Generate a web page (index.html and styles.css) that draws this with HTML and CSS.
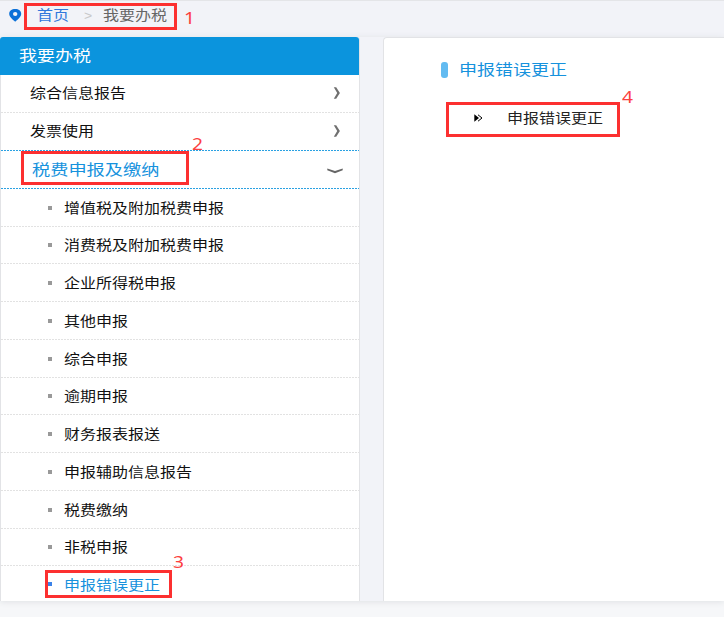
FILE: index.html
```html
<!DOCTYPE html>
<html lang="zh-CN">
<head>
<meta charset="utf-8">
<title>我要办税</title>
<link rel="stylesheet" href="styles.css">
</head>
<body>
<nav class="crumbs">
  <svg class="pin" viewBox="0 0 13 13"><path fill="#0b70d8" fill-rule="evenodd" d="M6.2 0C2.7 0 .2 2 .2 4.800C.2 7.900 3.500 10.600 6.200 12.700C8.900 10.600 12.200 7.900 12.200 4.800C12.200 2 9.700 0 6.200 0ZM6.200 3.100A2.200 1.900 0 1 1 6.200 6.900A2.200 1.900 0 1 1 6.200 3.100Z"/></svg>
  <a class="home"><span class="t">首页</span></a>
  <span class="sep">&gt;</span>
  <span class="here"><span class="t">我要办税</span></span>
</nav>
<main class="columns">
  <aside class="side">
    <h1 class="title"><span class="t">我要办税</span></h1>
    <div class="row group"><span class="t">综合信息报告</span><svg class="arrow" viewBox="0 0 8 14"><path d="M.8 1.200H3.200L6.900 7L3.200 12.800H.8L4.200 7Z"/></svg></div>
    <div class="row group before"><span class="t">发票使用</span><svg class="arrow" viewBox="0 0 8 14"><path d="M.8 1.200H3.200L6.900 7L3.200 12.800H.8L4.200 7Z"/></svg></div>
    <div class="row group open"><span class="t">税费申报及缴纳</span><svg class="arrow-down" viewBox="0 0 16 6"><path d="M.3 .5L8 3L15.700 .5V2.300L8 5.300L.3 2.300Z"/></svg></div>
    <div class="row sub"><span class="t">增值税及附加税费申报</span></div>
    <div class="row sub"><span class="t">消费税及附加税费申报</span></div>
    <div class="row sub"><span class="t">企业所得税申报</span></div>
    <div class="row sub"><span class="t">其他申报</span></div>
    <div class="row sub"><span class="t">综合申报</span></div>
    <div class="row sub"><span class="t">逾期申报</span></div>
    <div class="row sub"><span class="t">财务报表报送</span></div>
    <div class="row sub"><span class="t">申报辅助信息报告</span></div>
    <div class="row sub"><span class="t">税费缴纳</span></div>
    <div class="row sub"><span class="t">非税申报</span></div>
    <div class="row sub current"><span class="t">申报错误更正</span></div>
  </aside>
  <section class="panel">
    <h2 class="heading"><span class="t">申报错误更正</span></h2>
    <a class="entry"><svg class="mark" viewBox="0 0 9 8"><path fill="#000" d="M.3 .2L5 4L.3 7.800Z"/><path fill="none" stroke="#000" d="M4 .8L8 4L4 7.200"/></svg><span class="t">申报错误更正</span></a>
  </section>
</main>
<div class="box box1"></div><b class="num num1">1</b>
<div class="box box2"></div><b class="num num2">2</b>
<div class="box box3"></div><b class="num num3">3</b>
<div class="box box4"></div><b class="num num4">4</b>
</body>
</html>
```
FILE: styles.css
```css
* { box-sizing: border-box; }
body {
  margin: 0;
  height: 617px;
  position: relative;
  overflow: hidden;
  background: #f6f7f9;
  font: 16px/20px "Noto Sans CJK SC", sans-serif;
  color: #111;
}
.t { display: inline-block; white-space: nowrap; transform: translateY(-1px) scaleY(.83); }
.crumbs {
  height: 37px;
  padding: 0 0 7px 9px;
  display: flex;
  align-items: center;
  background: #f2f3f8;
  border-top: 1px solid #e4e5e8;
}
.crumbs .t, .title .t, .heading .t, .group .t { transform: translateY(-2px) scaleY(.83); }
.pin { width: 13px; height: 13px; }
.home { margin-left: 15px; color: #3077dc; }
.sep { width: 9px; margin: 0 11px 0 15px; color: #c8c8ca; font: 14px/20px "Liberation Sans", sans-serif; transform: scaleY(.85); }
.here { color: #666; margin-left: -1px; }
.columns {
  display: flex;
  height: 564px;
  gap: 24px;
  background: #f2f3f8;
  box-shadow: 0 1px 6px #dfe1e4;
}
.side {
  width: 360px;
  background: #fff;
  border: solid #e2e3e6;
  border-width: 0 1px;
  border-radius: 3px 3px 0 0;
}
.title {
  margin: 0 0 1px -1px;
  height: 37.500px;
  padding-left: 19px;
  display: flex;
  align-items: center;
  background: #0b94dd;
  color: #fff;
  font-size: 18px;
  font-weight: 400;
  border-radius: 3px 3px 0 0;
}
.row {
  --line: #e2e2e2;
  height: 37.750px;
  display: flex;
  align-items: center;
  background: repeating-linear-gradient(90deg, var(--line) 0 2px, #fff 2px 3px) 0 100% / 100% 1px no-repeat;
}
.group { padding: 0 18px 0 29px; justify-content: space-between; }
.before, .open { --line: #2aa1e2; }
.arrow { width: 8px; height: 14px; fill: #707070; margin-top: -2px; }
.arrow-down { width: 16px; height: 6px; fill: #666; margin-top: 2px; }
.open { padding: 0 16px 0 31px; color: #1692dd; font-size: 18.200px; }
.sub { padding-left: 47px; }
.sub::before { content: ""; width: 4px; height: 4px; margin-right: 12px; background: #999; }
.current { color: #1692dd; background: none; height: 35px; }
.current .t { transform: scaleY(.83); }
.current::before { background: #3b82e8; }
.panel {
  flex: 1;
  background: #fff;
  border: solid #e2e3e6;
  border-width: 1px 0 0 1px;
  border-radius: 4px 0 0 0;
  margin-left: -1px;
  padding: 22px 0 0 57px;
}
.heading {
  margin: 0;
  display: flex;
  align-items: center;
  color: #1692dd;
  font-size: 18px;
  font-weight: 400;
}
.heading::before { content: ""; width: 7px; height: 16px; margin-right: 11px; border-radius: 3px; background: #62bbf1; }
.entry { display: flex; align-items: center; margin-top: 28px; padding-left: 33px; color: #222; }
.mark { width: 9px; height: 8px; margin-right: 24px; }
.box { position: absolute; border: 3px solid #fc3030; }
.box1 { left: 24px; top: 3px; width: 153px; height: 27px; }
.box2 { left: 21px; top: 151px; width: 168px; height: 34px; }
.box3 { left: 45px; top: 570px; width: 127px; height: 28px; }
.box4 { left: 446px; top: 102px; width: 174px; height: 35px; }
.num { position: absolute; color: #fc4040; font: 400 16px/16px "Noto Sans", sans-serif; transform: scaleX(1.2); transform-origin: 0 0; }
.num1 { left: 184px; top: 10px; }
.num2 { left: 192px; top: 136px; }
.num3 { left: 173px; top: 554px; }
.num4 { left: 622px; top: 89px; }
```
